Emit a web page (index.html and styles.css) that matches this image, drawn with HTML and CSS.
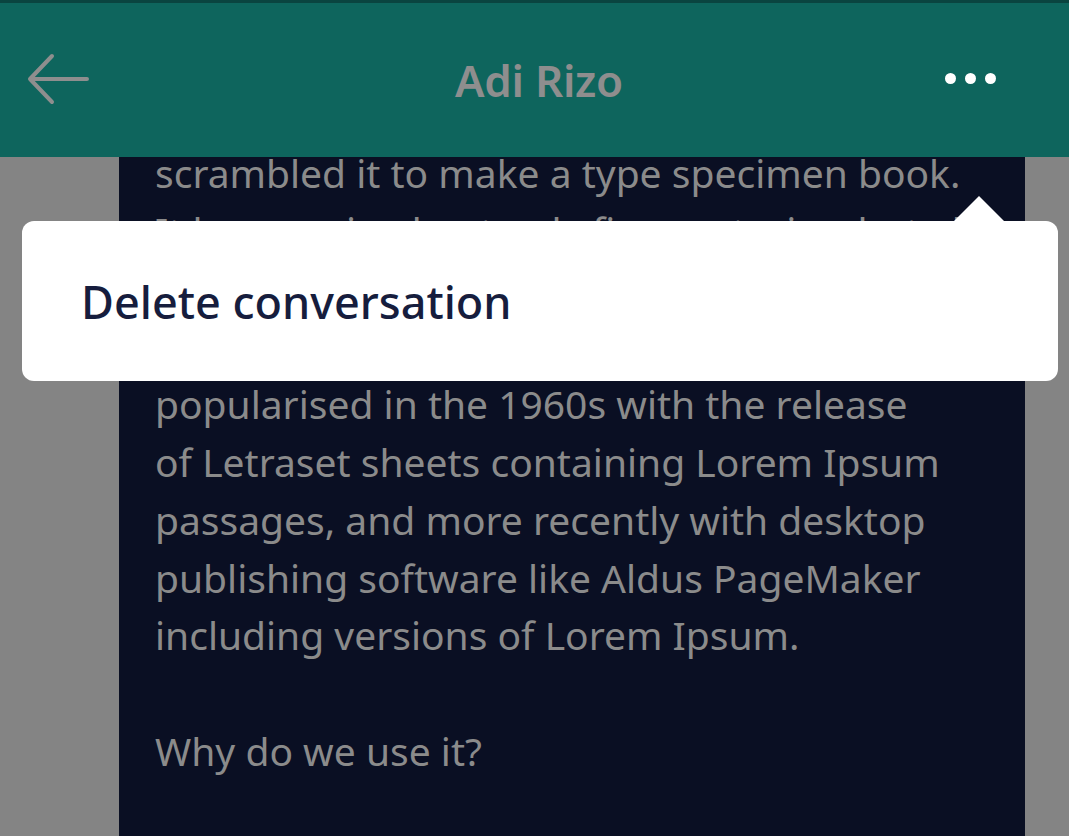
FILE: index.html
```html
<!DOCTYPE html>
<html lang="en">
<head>
  <meta charset="UTF-8" />
  <meta name="viewport" content="width=device-width, initial-scale=1.0" />
  <title>Adi Rizo</title>
  <link rel="stylesheet" href="styles.css">
</head>
<body>
  <header class="topbar">
    <button class="back" type="button" aria-label="Back">
      <svg width="64" height="52" viewBox="0 0 64 52">
        <path d="M61 26H4M26 3L4 26l22 23" fill="none" stroke="#8e8e8e" stroke-width="4" stroke-linecap="round" stroke-linejoin="round"/>
      </svg>
    </button>
    <h1 class="title">Adi Rizo</h1>
    <button class="more" type="button" aria-label="More">
      <span></span><span></span><span></span>
    </button>
  </header>

  <main class="thread">
    <p class="message">scrambled it to make a type specimen book.<br>
    It has survived not only five centuries, but also<br>
    the leap into electronic typesetting, remaining<br>
    essentially unchanged. It was<br>
    popularised in the 1960s with the release<br>
    of Letraset sheets containing Lorem Ipsum<br>
    passages, and more recently with desktop<br>
    publishing software like Aldus PageMaker<br>
    including versions of Lorem Ipsum.</p>
    <p class="message">Why do we use it?</p>
  </main>

  <div class="menu">
    <button class="menu-item" type="button">Delete conversation</button>
  </div>
</body>
</html>
```

FILE: styles.css
```css
html, body {
  margin: 0;
  height: 100%;
}

body {
  background: #848484;
  font-family: "Noto Sans", "Open Sans", sans-serif;
  overflow: hidden;
}

.topbar {
  position: fixed;
  top: 0;
  left: 0;
  right: 0;
  height: 154px;
  border-top: 3px solid #0a4440;
  background: #0e655d;
  display: grid;
  grid-template-columns: 1fr auto 1fr;
  align-items: center;
  padding: 0 73px 0 26px;
  z-index: 2;
}

.topbar button {
  background: none;
  border: none;
  padding: 0;
  cursor: pointer;
}

.back {
  display: flex;
  justify-self: start;
  margin-top: -2px;
}

.title {
  margin: 0 0 0 56px;
  font-size: 44px;
  font-weight: 600;
  color: #8e8e8e;
  letter-spacing: -0.3px;
}

.more {
  display: flex;
  justify-self: end;
  gap: 9px;
  margin-top: -4px;
}

.more span {
  width: 11px;
  height: 11px;
  border-radius: 50%;
  background: #fff;
}

.thread {
  margin: 0 44px 0 119px;
  min-height: 100%;
  box-sizing: border-box;
  padding: 144px 20px 0 36px;
  background: #0a0f23;
}

.message {
  margin: 0 0 57.8px;
  font-size: 39px;
  line-height: 57.8px;
  color: #8b8b8b;
  white-space: nowrap;
}

.menu {
  position: absolute;
  top: 221px;
  left: 22px;
  width: 1036px;
  height: 160px;
  background: #fff;
  border-radius: 12px;
  display: flex;
  align-items: center;
  z-index: 3;
}

.menu::before {
  content: "";
  position: absolute;
  top: -25px;
  right: 53px;
  border: 26px solid transparent;
  border-top: 0;
  border-bottom: 26px solid #fff;
}

.menu-item {
  background: none;
  border: none;
  padding: 0 0 0 59px;
  font-family: inherit;
  font-size: 45px;
  font-weight: 500;
  color: #161d3d;
  cursor: pointer;
}
```
